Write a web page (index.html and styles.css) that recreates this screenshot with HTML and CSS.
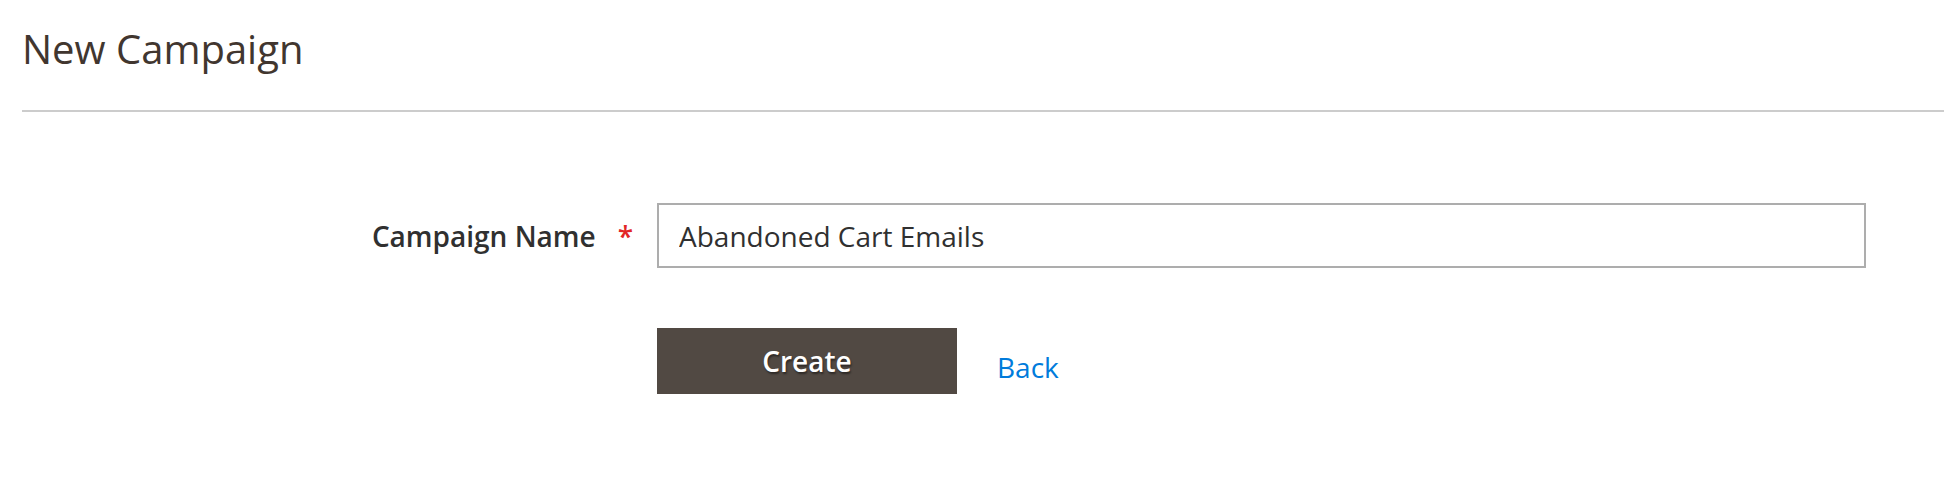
FILE: index.html
```html
<!DOCTYPE html>
<html>
<head>
<meta charset="utf-8">
<link rel="stylesheet" href="styles.css">
</head>
<body>
<div class="page">
  <header class="page-header">
    <h1 class="page-title">New Campaign</h1>
  </header>
  <form class="form">
    <div class="field">
      <label class="field-label" for="name">Campaign Name<span class="req">*</span></label>
      <input class="field-input" id="name" type="text" value="Abandoned Cart Emails">
    </div>
    <div class="actions">
      <button type="button" class="btn-primary">Create</button>
      <a class="link" href="#">Back</a>
    </div>
  </form>
</div>
</body>
</html>
```

FILE: styles.css
```css
html, body {
  margin: 0;
  padding: 0;
  background: #ffffff;
}
body {
  font-family: "Open Sans", "Noto Sans", sans-serif;
  color: #303030;
}
.page {
  padding-left: 22px;
}
.page-header {
  box-sizing: border-box;
  height: 112px;
  border-bottom: 2px solid #cccccc;
}
.page-title {
  margin: 0;
  padding-top: 20px;
  font-size: 40px;
  font-weight: 400;
  line-height: 58px;
  color: #41362f;
}
.form {
  padding-top: 91px;
}
.field {
  display: flex;
  align-items: center;
}
.field-label {
  width: 635px;
  box-sizing: border-box;
  text-align: right;
  font-size: 28px;
  font-weight: 600;
  color: #303030;
  padding-right: 24px;
}
.req {
  color: #e22626;
  margin-left: 22px;
  font-weight: 600;
}
.field-input {
  width: 1209px;
  height: 65px;
  box-sizing: border-box;
  border: 2px solid #adadad;
  border-radius: 0;
  padding: 0 20px;
  font-family: "Open Sans", "Noto Sans", sans-serif;
  font-size: 28px;
  color: #303030;
  outline: none;
}
.actions {
  display: flex;
  align-items: center;
  margin-top: 60px;
  margin-left: 635px;
}
.btn-primary {
  width: 300px;
  height: 66px;
  background: #514943;
  border: none;
  border-radius: 0;
  color: #ffffff;
  font-family: "Open Sans", "Noto Sans", sans-serif;
  font-size: 28px;
  font-weight: 600;
  text-shadow: 1px 2px 2px rgba(0, 0, 0, 0.45);
  padding: 0;
}
.link {
  margin-left: 40px;
  margin-top: 12px;
  font-size: 28px;
  color: #007bdb;
  text-decoration: none;
}
```
